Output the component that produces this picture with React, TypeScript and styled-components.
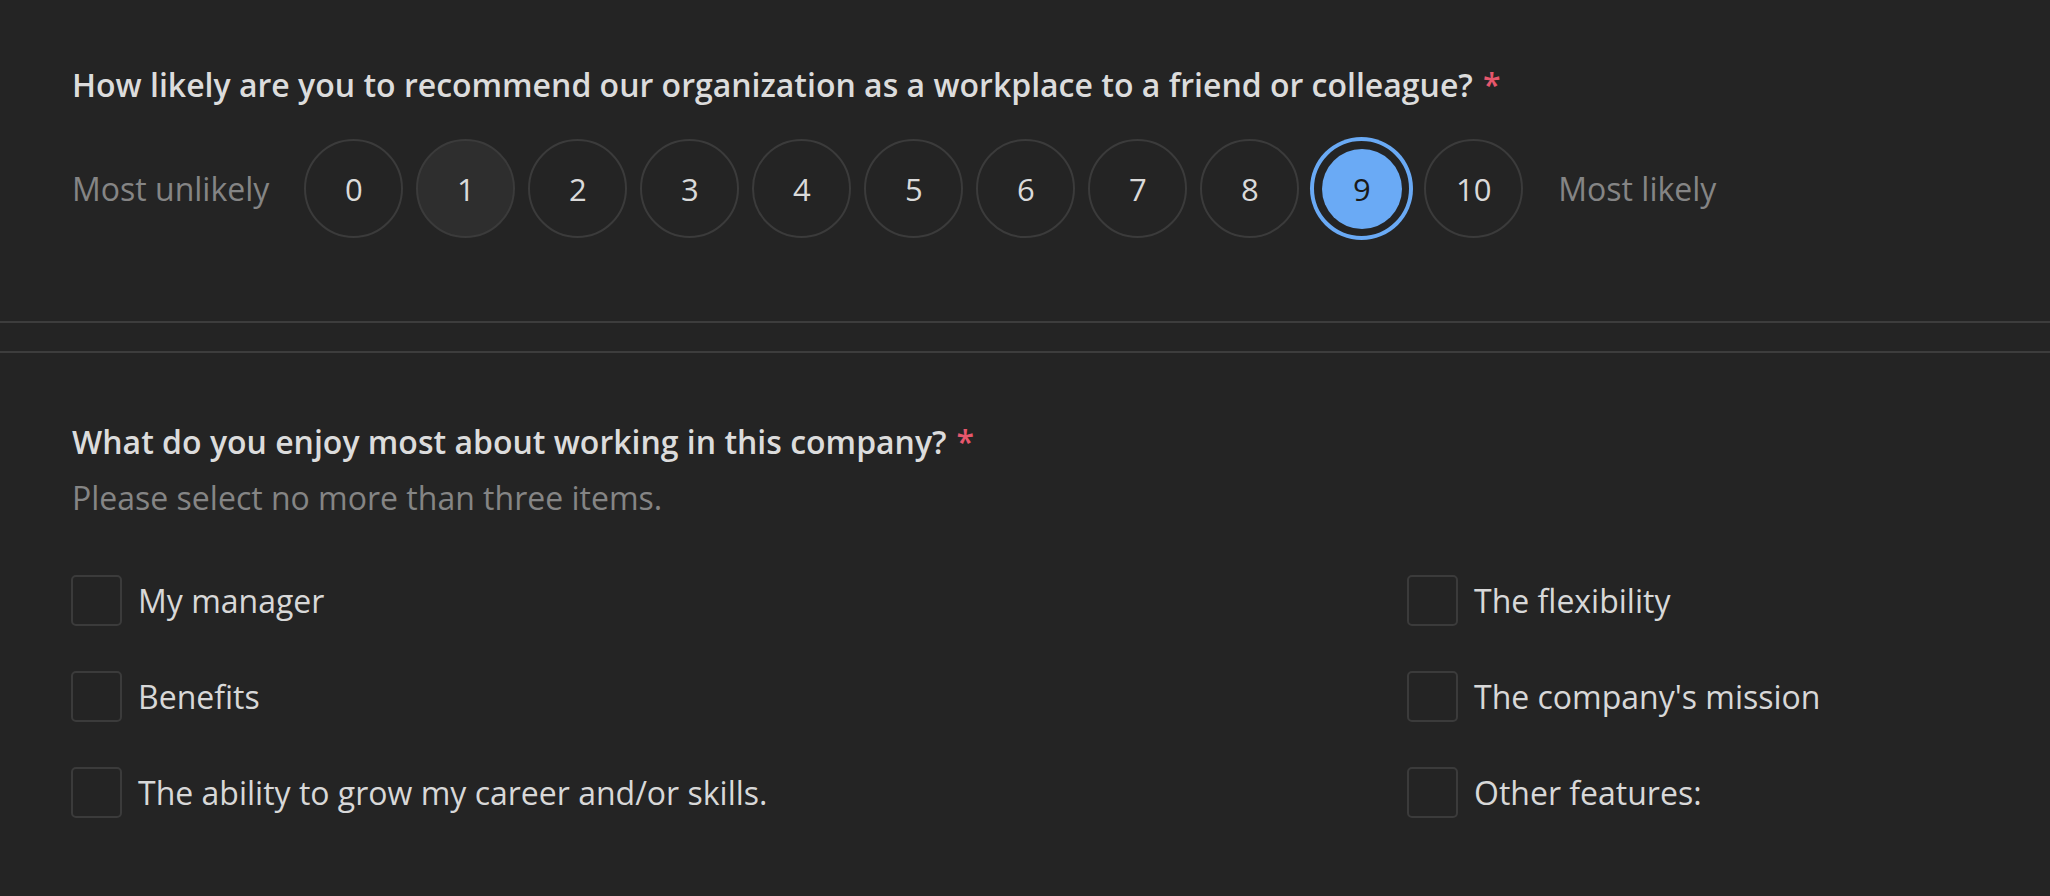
import { useState } from 'react';
import styled, { createGlobalStyle } from 'styled-components';

const GlobalStyle = createGlobalStyle`
    html, body {
        margin: 0;
        padding: 0;
        background: #242424;
    }

    body {
        font-family: 'Open Sans', 'Noto Sans', sans-serif;
        color: #dadada;
        overflow: hidden;
    }
`;

const ratingValues = Array.from({ length: 11 }, (_, i) => i);

const leftChoices = ['My manager', 'Benefits', 'The ability to grow my career and/or skills.'];
const rightChoices = ['The flexibility', "The company's mission", 'Other features:'];

export default function App() {
    const [rating, setRating] = useState(9);
    const [checked, setChecked] = useState<string[]>([]);

    const toggle = (name: string) => {
        setChecked((prev) => (prev.includes(name) ? prev.filter((c) => c !== name) : [...prev, name]));
    };

    return (
        <>
            <GlobalStyle />
            <Page>
                <Question>
                    <Title>
                        How likely are you to recommend our organization as a workplace to a friend or colleague?
                        <Required>*</Required>
                    </Title>
                    <RatingRow>
                        <RatingLabel>Most unlikely</RatingLabel>
                        <Circles>
                            {ratingValues.map((v) => (
                                <Circle key={v} $selected={v === rating} $hovered={v === 1} onClick={() => setRating(v)}>
                                    {v}
                                </Circle>
                            ))}
                        </Circles>
                        <RatingLabel>Most likely</RatingLabel>
                    </RatingRow>
                </Question>

                <Question $second>
                    <Title>
                        What do you enjoy most about working in this company?
                        <Required>*</Required>
                    </Title>
                    <Description>Please select no more than three items.</Description>
                    <ChoiceGrid>
                        <ChoiceColumn>
                            {leftChoices.map((c) => (
                                <Choice key={c} onClick={() => toggle(c)}>
                                    <Box $checked={checked.includes(c)} />
                                    <ChoiceText>{c}</ChoiceText>
                                </Choice>
                            ))}
                        </ChoiceColumn>
                        <ChoiceColumn>
                            {rightChoices.map((c) => (
                                <Choice key={c} onClick={() => toggle(c)}>
                                    <Box $checked={checked.includes(c)} />
                                    <ChoiceText>{c}</ChoiceText>
                                </Choice>
                            ))}
                        </ChoiceColumn>
                    </ChoiceGrid>
                </Question>
            </Page>
        </>
    );
}

const Page = styled.div`
    width: 2050px;
    height: 896px;
    display: flex;
    flex-direction: column;
    gap: 28px;
`;

const Question = styled.section<{ $second?: boolean }>`
    padding: ${({ $second }) => ($second ? '65px 0 0 72px' : '61px 0 83px 72px')};
    border-top: ${({ $second }) => ($second ? '2px solid #3d3d3d' : 'none')};
    border-bottom: ${({ $second }) => ($second ? 'none' : '2px solid #3d3d3d')};
    flex: ${({ $second }) => ($second ? '1' : 'none')};
`;

const Title = styled.h2`
    margin: 0;
    font-size: 32px;
    line-height: 48px;
    font-weight: 600;
    color: #dcdcdc;
    white-space: nowrap;
`;

const Required = styled.span`
    color: #e6576c;
    margin-left: 10px;
`;

const RatingRow = styled.div`
    margin-top: 30px;
    display: flex;
    align-items: center;
    gap: 35px;
`;

const RatingLabel = styled.span`
    font-size: 32px;
    color: #858585;
    white-space: nowrap;
`;

const Circles = styled.div`
    display: flex;
    gap: 13px;
`;

const Circle = styled.div<{ $selected: boolean; $hovered: boolean }>`
    box-sizing: border-box;
    width: 99px;
    height: 99px;
    border-radius: 50%;
    display: flex;
    align-items: center;
    justify-content: center;
    font-size: 31px;
    cursor: pointer;
    border: 2px solid ${({ $selected }) => ($selected ? '#6aaaf5' : '#3b3b3b')};
    color: ${({ $selected }) => ($selected ? '#1a1a1a' : '#dadada')};
    background: ${({ $selected, $hovered }) => ($selected ? '#6aaaf5' : $hovered ? '#2e2e2e' : 'transparent')};
    padding: ${({ $selected }) => ($selected ? '7.5px' : '0')};
    background-clip: ${({ $selected }) => ($selected ? 'content-box' : 'border-box')};
    box-shadow: ${({ $selected }) => ($selected ? '0 0 0 2px #6aaaf5' : 'none')};
`;

const Description = styled.div`
    margin-top: 8px;
    font-size: 32px;
    line-height: 48px;
    color: #858585;
`;

const ChoiceGrid = styled.div`
    margin-top: 53px;
    margin-left: -1px;
    display: grid;
    grid-template-columns: 1336px 1fr;
`;

const ChoiceColumn = styled.div`
    display: flex;
    flex-direction: column;
    gap: 45px;
`;

const Choice = styled.label`
    display: flex;
    align-items: center;
    gap: 16px;
    cursor: pointer;
`;

const Box = styled.span<{ $checked: boolean }>`
    box-sizing: border-box;
    width: 51px;
    height: 51px;
    border-radius: 5px;
    border: 2px solid ${({ $checked }) => ($checked ? '#6aaaf5' : '#3b3b3b')};
    background: ${({ $checked }) => ($checked ? '#6aaaf5' : 'transparent')};
    flex: none;
`;

const ChoiceText = styled.span`
    font-size: 32px;
    line-height: 48px;
    color: #d8d8d8;
    white-space: nowrap;
`;
